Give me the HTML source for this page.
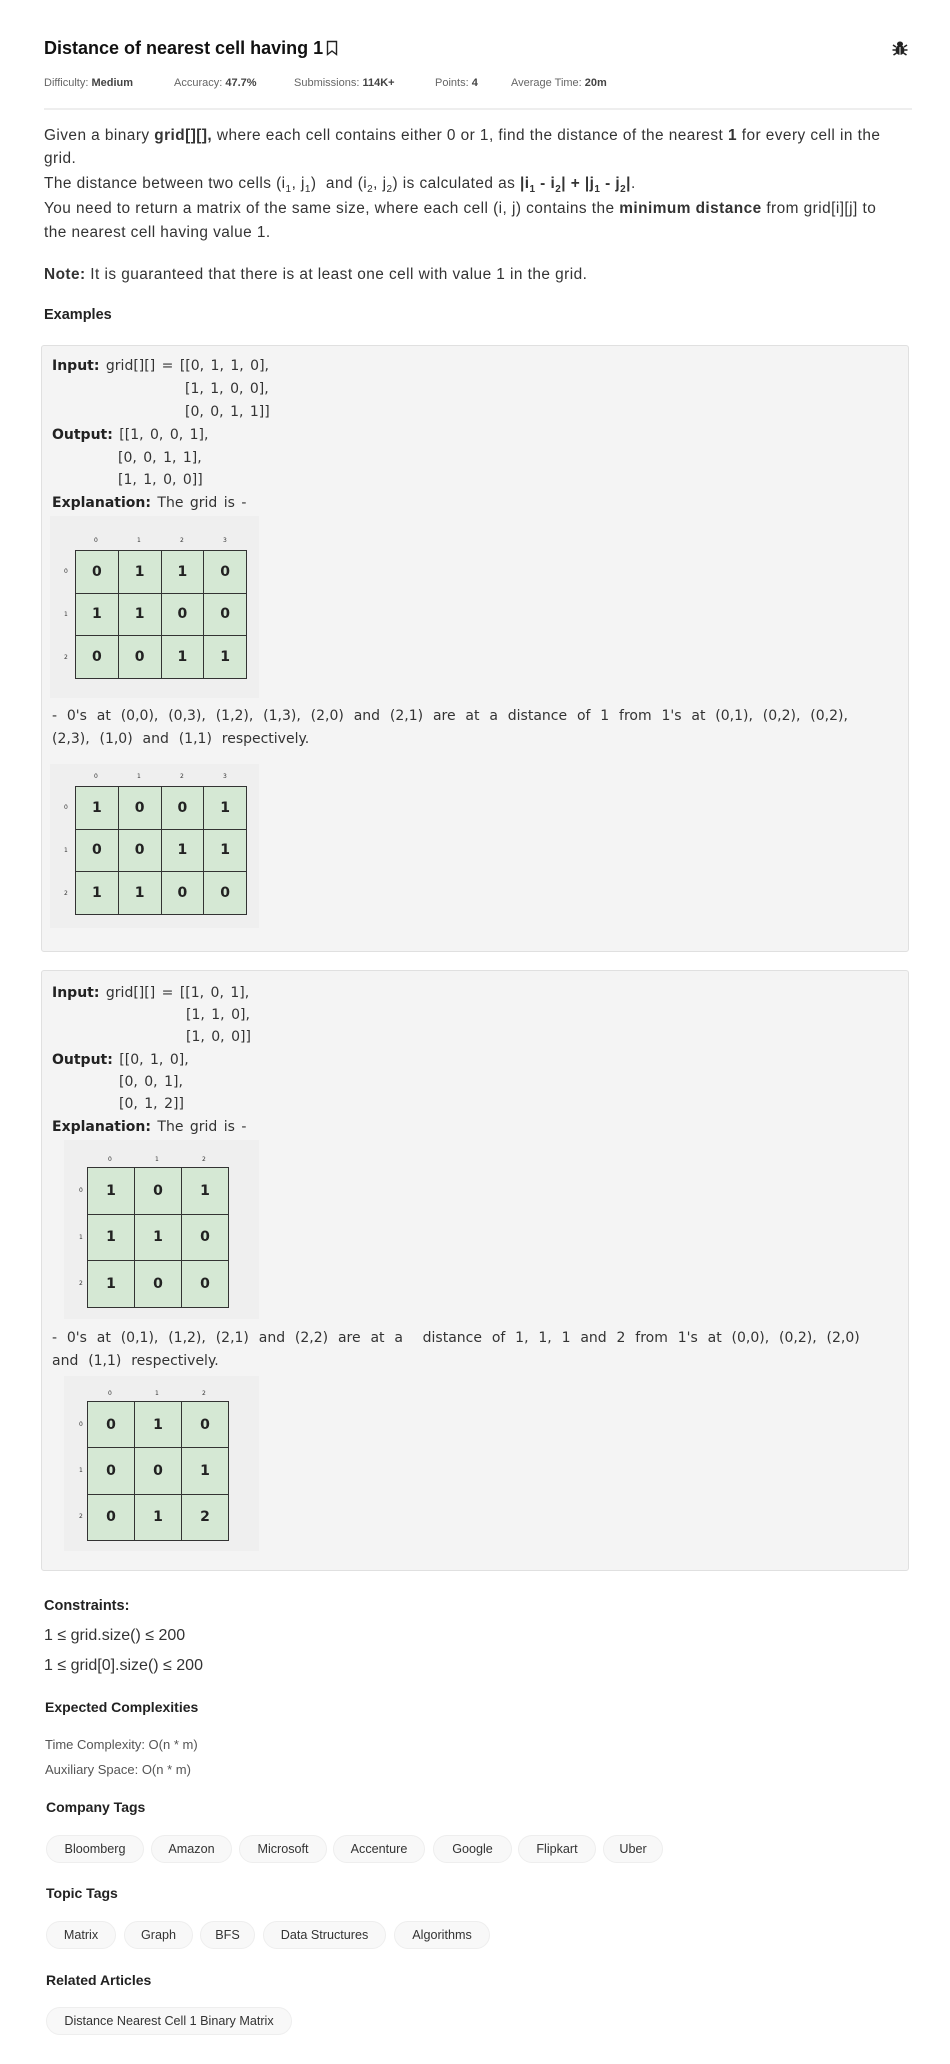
<!DOCTYPE html>
<html><head><meta charset="utf-8"><style>
*{margin:0;padding:0;box-sizing:border-box}
body{width:950px;height:2064px;background:#fff;position:relative;font-family:"Liberation Sans",sans-serif;color:#222;overflow:hidden}
.a{position:absolute;white-space:nowrap}
.t{font-size:18px;font-weight:bold;color:#111}
.meta{font-size:11px;color:#666}
.meta b{color:#444}
.p{font-size:15.4px;color:#333;left:44px;line-height:18px;letter-spacing:0.45px}
.p sub{font-size:10px;line-height:0}
.h{font-size:14.5px;font-weight:bold;color:#222}
.box{position:absolute;left:41px;width:868px;background:#f4f4f4;border:1px solid #e0e0e0;border-radius:3px}
.ex{font-family:"DejaVu Sans",sans-serif;font-size:14px;color:#333;line-height:22.6px;word-spacing:2px}
.ex b{color:#222}
.gbg{position:absolute;background:#efefef}
table{position:absolute;border-collapse:collapse;font-family:"DejaVu Sans",sans-serif;font-weight:bold;font-size:14px;color:#222}
td{background:#d5e8d4;border:1.5px solid #333;text-align:center;padding:0}
.lb{position:absolute;font-family:"DejaVu Sans",sans-serif;font-size:6px;color:#333}
.chip{position:absolute;height:28px;line-height:26px;padding:0;text-align:center;background:#f8f8f8;border:1px solid #eee;border-radius:14px;font-size:12.6px;color:#333;white-space:nowrap}
.sm{font-size:13px;color:#555}
</style></head><body>

<div class="a t" style="left:44px;top:38px">Distance of nearest cell having 1<svg width="14" height="16" viewBox="0 0 14 16" style="vertical-align:-2px;margin-left:2px"><path d="M2.5 1.5h9v13l-4.5-3.5-4.5 3.5z" fill="none" stroke="#222" stroke-width="1.4"/></svg></div>
<svg class="a" style="left:891px;top:39px" width="18" height="18" viewBox="0 0 18 18"><ellipse cx="9" cy="5" rx="3" ry="2.5" fill="#222"/><ellipse cx="9" cy="11" rx="4.5" ry="5" fill="#222"/><path d="M2 6l3 2M16 6l-3 2M1.5 11h3M16.5 11h-3M2.5 16l3-2M15.5 16l-3-2" stroke="#222" stroke-width="1.6"/><path d="M9 8v8" stroke="#fff" stroke-width="1"/></svg>

<div class="a meta" style="left:44px;top:77px">Difficulty: <b>Medium</b></div>
<div class="a meta" style="left:174px;top:77px">Accuracy: <b>47.7%</b></div>
<div class="a meta" style="left:294px;top:77px">Submissions: <b>114K+</b></div>
<div class="a meta" style="left:435px;top:77px">Points: <b>4</b></div>
<div class="a meta" style="left:511px;top:77px">Average Time: <b>20m</b></div>
<div class="a" style="left:44px;top:108px;width:868px;height:2px;background:#eee"></div>

<div class="a p" style="top:127px">Given a binary <b>grid[][],</b> where each cell contains either 0 or 1, find the distance of the nearest <b>1</b> for every cell in the</div>
<div class="a p" style="top:150px">grid.</div>
<div class="a p" style="top:175px">The distance between two cells (i<sub>1</sub>, j<sub>1</sub>)&nbsp; and (i<sub>2</sub>, j<sub>2</sub>) is calculated as <b>|i<sub>1</sub> - i<sub>2</sub>| + |j<sub>1</sub> - j<sub>2</sub>|</b>.</div>
<div class="a p" style="top:200px">You need to return a matrix of the same size, where each cell (i, j) contains the <b>minimum distance</b> from grid[i][j] to</div>
<div class="a p" style="top:224px">the nearest cell having value 1.</div>
<div class="a p" style="top:266px"><b>Note:</b> It is guaranteed that there is at least one cell with value 1 in the grid.</div>
<div class="a h" style="left:44px;top:307px">Examples</div>

<!-- Box 1 -->
<div class="box" style="top:345px;height:607px"></div>
<div class="a ex" style="left:52px;top:355px"><b>Input:</b> grid[][] = [[0, 1, 1, 0],</div>
<div class="a ex" style="left:185px;top:378px">[1, 1, 0, 0],</div>
<div class="a ex" style="left:185px;top:401px">[0, 0, 1, 1]]</div>
<div class="a ex" style="left:52px;top:424px"><b>Output:</b> [[1, 0, 0, 1],</div>
<div class="a ex" style="left:118px;top:447px">[0, 0, 1, 1],</div>
<div class="a ex" style="left:118px;top:469px">[1, 1, 0, 0]]</div>
<div class="a ex" style="left:52px;top:492px"><b>Explanation:</b> The grid is -</div>

<div class="gbg" style="left:50px;top:516px;width:209px;height:182px"></div>
<div class="lb" style="left:94px;top:537px">0</div><div class="lb" style="left:137px;top:537px">1</div><div class="lb" style="left:180px;top:537px">2</div><div class="lb" style="left:223px;top:537px">3</div>
<div class="lb" style="left:64px;top:568px">0</div><div class="lb" style="left:64px;top:611px">1</div><div class="lb" style="left:64px;top:654px">2</div>
<table style="left:75px;top:550px;width:172px;height:129px"><tr><td>0</td><td>1</td><td>1</td><td>0</td></tr><tr><td>1</td><td>1</td><td>0</td><td>0</td></tr><tr><td>0</td><td>0</td><td>1</td><td>1</td></tr></table>

<div class="a ex" style="left:52px;top:705px;word-spacing:5.4px">- 0's at (0,0), (0,3), (1,2), (1,3), (2,0) and (2,1) are at a distance of 1 from 1's at (0,1), (0,2), (0,2),</div>
<div class="a ex" style="left:52px;top:728px;word-spacing:5.4px">(2,3), (1,0) and (1,1) respectively.</div>

<div class="gbg" style="left:50px;top:764px;width:209px;height:164px"></div>
<div class="lb" style="left:94px;top:773px">0</div><div class="lb" style="left:137px;top:773px">1</div><div class="lb" style="left:180px;top:773px">2</div><div class="lb" style="left:223px;top:773px">3</div>
<div class="lb" style="left:64px;top:804px">0</div><div class="lb" style="left:64px;top:847px">1</div><div class="lb" style="left:64px;top:890px">2</div>
<table style="left:75px;top:786px;width:172px;height:129px"><tr><td>1</td><td>0</td><td>0</td><td>1</td></tr><tr><td>0</td><td>0</td><td>1</td><td>1</td></tr><tr><td>1</td><td>1</td><td>0</td><td>0</td></tr></table>

<!-- Box 2 -->
<div class="box" style="top:970px;height:601px"></div>
<div class="a ex" style="left:52px;top:982px"><b>Input:</b> grid[][] = [[1, 0, 1],</div>
<div class="a ex" style="left:186px;top:1004px">[1, 1, 0],</div>
<div class="a ex" style="left:186px;top:1026px">[1, 0, 0]]</div>
<div class="a ex" style="left:52px;top:1049px"><b>Output:</b> [[0, 1, 0],</div>
<div class="a ex" style="left:119px;top:1071px">[0, 0, 1],</div>
<div class="a ex" style="left:119px;top:1093px">[0, 1, 2]]</div>
<div class="a ex" style="left:52px;top:1116px"><b>Explanation:</b> The grid is -</div>

<div class="gbg" style="left:64px;top:1140px;width:195px;height:179px"></div>
<div class="lb" style="left:108px;top:1156px">0</div><div class="lb" style="left:155px;top:1156px">1</div><div class="lb" style="left:202px;top:1156px">2</div>
<div class="lb" style="left:79px;top:1187px">0</div><div class="lb" style="left:79px;top:1234px">1</div><div class="lb" style="left:79px;top:1280px">2</div>
<table style="left:87px;top:1167px;width:142px;height:141px"><tr><td>1</td><td>0</td><td>1</td></tr><tr><td>1</td><td>1</td><td>0</td></tr><tr><td>1</td><td>0</td><td>0</td></tr></table>

<div class="a ex" style="left:52px;top:1327px;word-spacing:5.4px">- 0's at (0,1), (1,2), (2,1) and (2,2) are at a &nbsp;distance of 1, 1, 1 and 2 from 1's at (0,0), (0,2), (2,0)</div>
<div class="a ex" style="left:52px;top:1350px;word-spacing:5.4px">and (1,1) respectively.</div>

<div class="gbg" style="left:64px;top:1376px;width:195px;height:175px"></div>
<div class="lb" style="left:108px;top:1390px">0</div><div class="lb" style="left:155px;top:1390px">1</div><div class="lb" style="left:202px;top:1390px">2</div>
<div class="lb" style="left:79px;top:1421px">0</div><div class="lb" style="left:79px;top:1467px">1</div><div class="lb" style="left:79px;top:1513px">2</div>
<table style="left:87px;top:1401px;width:142px;height:140px"><tr><td>0</td><td>1</td><td>0</td></tr><tr><td>0</td><td>0</td><td>1</td></tr><tr><td>0</td><td>1</td><td>2</td></tr></table>

<div class="a h" style="left:44px;top:1598px">Constraints:</div>
<div class="a" style="left:44px;top:1627px;font-size:16px;color:#333">1 ≤ grid.size() ≤ 200</div>
<div class="a" style="left:44px;top:1657px;font-size:16px;color:#333">1 ≤ grid[0].size() ≤ 200</div>
<div class="a h" style="left:45px;top:1699px;font-size:14px">Expected Complexities</div>
<div class="a sm" style="left:45px;top:1737px">Time Complexity: O(n * m)</div>
<div class="a sm" style="left:45px;top:1762px">Auxiliary Space: O(n * m)</div>
<div class="a h" style="left:46px;top:1799px;font-size:14px">Company Tags</div>
<div class="chip" style="left:46px;top:1835px;width:98px">Bloomberg</div>
<div class="chip" style="left:151px;top:1835px;width:81px">Amazon</div>
<div class="chip" style="left:239px;top:1835px;width:88px">Microsoft</div>
<div class="chip" style="left:333px;top:1835px;width:92px">Accenture</div>
<div class="chip" style="left:433px;top:1835px;width:79px">Google</div>
<div class="chip" style="left:518px;top:1835px;width:78px">Flipkart</div>
<div class="chip" style="left:603px;top:1835px;width:60px">Uber</div>
<div class="a h" style="left:46px;top:1885px;font-size:14px">Topic Tags</div>
<div class="chip" style="left:46px;top:1921px;width:70px">Matrix</div>
<div class="chip" style="left:124px;top:1921px;width:69px">Graph</div>
<div class="chip" style="left:200px;top:1921px;width:55px">BFS</div>
<div class="chip" style="left:263px;top:1921px;width:123px">Data Structures</div>
<div class="chip" style="left:394px;top:1921px;width:96px">Algorithms</div>
<div class="a h" style="left:46px;top:1972px;font-size:14px">Related Articles</div>
<div class="chip" style="left:46px;top:2007px;width:246px">Distance Nearest Cell 1 Binary Matrix</div>
</body></html>
